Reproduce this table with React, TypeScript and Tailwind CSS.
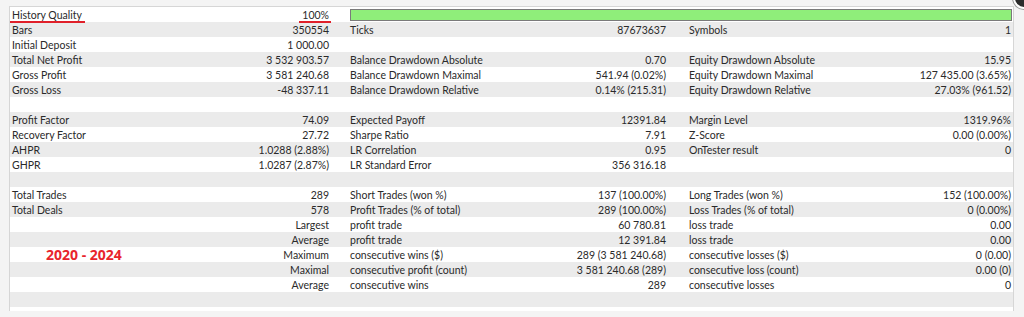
import React from 'react';

type Cell = [string, string] | null;

const rows: Cell[][] = [
  [['Bars', '350554'], ['Ticks', '87673637'], ['Symbols', '1']],
  [['Initial Deposit', '1 000.00'], null, null],
  [['Total Net Profit', '3 532 903.57'], ['Balance Drawdown Absolute', '0.70'], ['Equity Drawdown Absolute', '15.95']],
  [['Gross Profit', '3 581 240.68'], ['Balance Drawdown Maximal', '541.94 (0.02%)'], ['Equity Drawdown Maximal', '127 435.00 (3.65%)']],
  [['Gross Loss', '-48 337.11'], ['Balance Drawdown Relative', '0.14% (215.31)'], ['Equity Drawdown Relative', '27.03% (961.52)']],
  [null, null, null],
  [['Profit Factor', '74.09'], ['Expected Payoff', '12391.84'], ['Margin Level', '1319.96%']],
  [['Recovery Factor', '27.72'], ['Sharpe Ratio', '7.91'], ['Z-Score', '0.00 (0.00%)']],
  [['AHPR', '1.0288 (2.88%)'], ['LR Correlation', '0.95'], ['OnTester result', '0']],
  [['GHPR', '1.0287 (2.87%)'], ['LR Standard Error', '356 316.18'], null],
  [null, null, null],
  [['Total Trades', '289'], ['Short Trades (won %)', '137 (100.00%)'], ['Long Trades (won %)', '152 (100.00%)']],
  [['Total Deals', '578'], ['Profit Trades (% of total)', '289 (100.00%)'], ['Loss Trades (% of total)', '0 (0.00%)']],
  [['', 'Largest'], ['profit trade', '60 780.81'], ['loss trade', '0.00']],
  [['', 'Average'], ['profit trade', '12 391.84'], ['loss trade', '0.00']],
  [['', 'Maximum'], ['consecutive wins ($)', '289 (3 581 240.68)'], ['consecutive losses ($)', '0 (0.00)']],
  [['', 'Maximal'], ['consecutive profit (count)', '3 581 240.68 (289)'], ['consecutive loss (count)', '0.00 (0)']],
  [['', 'Average'], ['consecutive wins', '289'], ['consecutive losses', '0']],
  [null, null, null],
];

// widths / paddings of the three column groups
const cellCls = [
  'w-[330px] pl-[2px] pr-[11px]',
  'w-[338px] pl-[10px] pr-[12px]',
  'flex-1 pl-[11px] pr-[2px]',
];

const StatRow: React.FC<{ cells: Cell[]; shaded: boolean }> = ({ cells, shaded }) => (
  <div className={`flex h-[15px] leading-[16px] ${shaded ? 'bg-[#ebebeb]' : 'bg-white'}`}>
    {cells.map((c, i) => (
      <div key={i} className={`flex justify-between whitespace-nowrap ${cellCls[i]}`}>
        <span>{c ? c[0] : ''}</span>
        <span>{c ? c[1] : ''}</span>
      </div>
    ))}
  </div>
);

const App: React.FC = () => {
  return (
    <div className="relative w-[1024px] h-[317px] overflow-hidden bg-[#f4f4f4] pt-[6px] pl-[9px]">
      <div
        className="relative w-[1005px] h-[305px] bg-white border-l border-t border-r border-[#d6d6d6] text-[10.5px] text-[#2a2a2a]"
        style={{ fontFamily: 'Lato, "Liberation Sans", sans-serif' }}
      >
        {/* history quality row */}
        <div className="flex h-[15px] leading-[16px] bg-white">
          <div className={`flex justify-between ${cellCls[0]}`}>
            <span className="relative">
              History Quality
              <span className="absolute left-[-2px] right-[-3px] top-[14px] h-[2px] bg-[#e0202a]" />
            </span>
            <span className="relative">
              100%
              <span className="absolute left-[-3px] right-[-2px] top-[14px] h-[2px] bg-[#e0202a]" />
            </span>
          </div>
          <div className="flex-1 flex items-center pl-[10px] pr-[1px]">
            <div className="w-full h-[12px] border border-[#7a7a7a] bg-[#8fee7a]" />
          </div>
        </div>

        {rows.map((cells, i) => (
          <StatRow key={i} cells={cells} shaded={i % 2 === 0} />
        ))}

        <div
          className="absolute left-[36px] top-[240px] text-[14px] font-bold text-[#e8242c] leading-[16px]"
          style={{ fontFamily: '"Open Sans", "Liberation Sans", sans-serif' }}
        >
          2020 - 2024
        </div>
      </div>

      <div className="absolute left-[1013px] top-[-13px] w-[22px] h-[22px] rounded-full bg-[#2c2c2c] border-[2px] border-white ring-1 ring-[#9a9a9a]" />
    </div>
  );
};

export default App;
